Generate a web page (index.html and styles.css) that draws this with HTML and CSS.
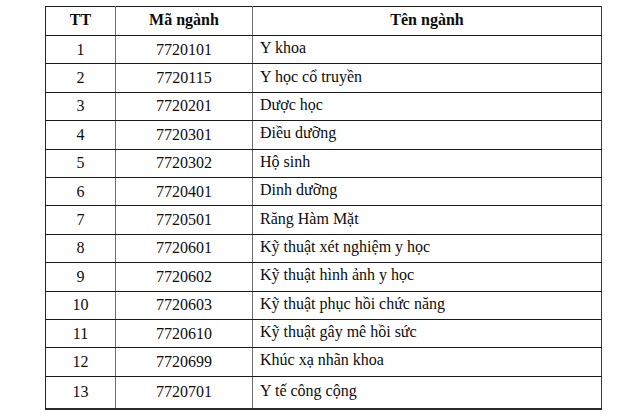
FILE: index.html
```html
<!DOCTYPE html>
<html lang="vi">
<head>
<meta charset="utf-8">
<title>Danh sách ngành</title>
<link rel="stylesheet" href="styles.css">
</head>
<body>
<table class="majors">
  <colgroup>
    <col class="c-tt">
    <col class="c-code">
    <col class="c-name">
  </colgroup>
  <thead>
    <tr><th>TT</th><th>Mã ngành</th><th>Tên ngành</th></tr>
  </thead>
  <tbody>
    <tr><td>1</td><td>7720101</td><td class="name">Y khoa</td></tr>
    <tr><td>2</td><td>7720115</td><td class="name">Y học cổ truyền</td></tr>
    <tr><td>3</td><td>7720201</td><td class="name">Dược học</td></tr>
    <tr><td>4</td><td>7720301</td><td class="name">Điều dưỡng</td></tr>
    <tr><td>5</td><td>7720302</td><td class="name">Hộ sinh</td></tr>
    <tr><td>6</td><td>7720401</td><td class="name">Dinh dưỡng</td></tr>
    <tr><td>7</td><td>7720501</td><td class="name">Răng Hàm Mặt</td></tr>
    <tr><td>8</td><td>7720601</td><td class="name">Kỹ thuật xét nghiệm y học</td></tr>
    <tr><td>9</td><td>7720602</td><td class="name">Kỹ thuật hình ảnh y học</td></tr>
    <tr><td>10</td><td>7720603</td><td class="name">Kỹ thuật phục hồi chức năng</td></tr>
    <tr><td>11</td><td>7720610</td><td class="name">Kỹ thuật gây mê hồi sức</td></tr>
    <tr><td>12</td><td>7720699</td><td class="name">Khúc xạ nhãn khoa</td></tr>
    <tr class="last"><td>13</td><td>7720701</td><td class="name">Y tế công cộng</td></tr>
  </tbody>
</table>
</body>
</html>
```
FILE: styles.css
```css
html, body {
  margin: 0;
  padding: 0;
  background: #ffffff;
}

body {
  font-family: "Liberation Serif", "Times New Roman", serif;
  font-size: 16px;
  color: #0d0d0d;
}

.majors {
  margin: 6px 0 0 45px;
  width: 556px;
  table-layout: fixed;
  border-collapse: collapse;
}

.c-tt { width: 70px; }
.c-code { width: 137px; }
.c-name { width: 349px; }

.majors th,
.majors td {
  box-sizing: border-box;
  border-top: 1px solid #1a1a1a;
  border-bottom: 1px solid #1a1a1a;
  border-left: 1px solid #6e6e6e;
  border-right: 1px solid #6e6e6e;
  padding: 0;
  line-height: 18px;
  text-align: center;
  vertical-align: middle;
}

.majors th:first-child,
.majors td:first-child {
  border-left-color: #2a2a2a;
}

.majors th:last-child,
.majors td:last-child {
  border-right-color: #3a3a3a;
}

.majors th {
  height: 29px;
  font-weight: bold;
  padding-bottom: 2px;
}

.majors td {
  height: 28.4px;
}

.majors td.name {
  text-align: left;
  padding-left: 7px;
  padding-bottom: 3px;
}

.majors tr.last td {
  height: 33px;
  border-bottom: 2px solid #2a2a2a;
}
```
